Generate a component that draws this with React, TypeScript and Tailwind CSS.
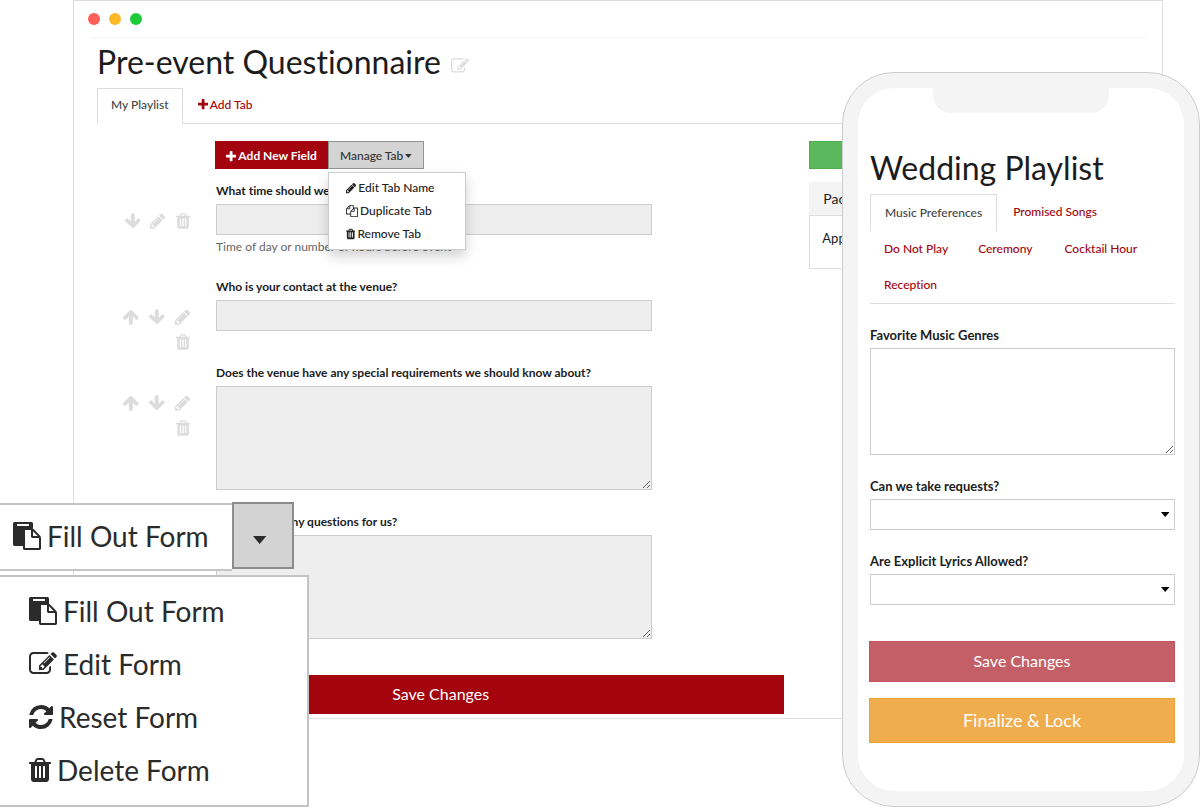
import type { ReactNode } from "react";

type IconShape = { box: string; path: string };

const SHAPES = {
  plus: {
    box: "192 0 1408 1792",
    path: "M1600 736v192q0 40-28 68t-68 28h-416v416q0 40-28 68t-68 28h-192q-40 0-68-28t-28-68v-416h-416q-40 0-68-28t-28-68v-192q0-40 28-68t68-28h416v-416q0-40 28-68t68-28h192q40 0 68 28t28 68v416h416q40 0 68 28t28 68z",
  },
  pencil: {
    box: "128 0 1536 1792",
    path: "M491 1536l91-91-235-235-91 91v107h128v128h107zm523-928q0-22-22-22-10 0-17 7l-542 542q-7 7-7 17 0 22 22 22 10 0 17-7l542-542q7-7 7-17zm-54-192l416 416-832 832h-416v-416zm683 96q0 53-37 90l-166 166-416-416 166-165q36-38 90-38 53 0 91 38l235 234q37 39 37 91z",
  },
  edit: {
    box: "0 0 1792 1792",
    path: "M888 1184l116-116-152-152-116 116v56h96v96h56zm440-720q-16-16-33 1l-350 350q-17 17-1 33t33-1l350-350q17-17 1-33zm80 594v190q0 119-84.5 203.5t-203.5 84.5h-832q-119 0-203.5-84.5t-84.5-203.5v-832q0-119 84.5-203.5t203.5-84.5h832q63 0 117 25 15 7 18 23 3 17-9 29l-49 49q-14 14-32 8-23-6-45-6h-832q-66 0-113 47t-47 113v832q0 66 47 113t113 47h832q66 0 113-47t47-113v-126q0-13 9-22l64-64q15-15 35-7t20 29zm-96-738l288 288-672 672h-288v-288zm444 132l-92 92-288-288 92-92q28-28 68-28t68 28l152 152q28 28 28 68t-28 68z",
  },
  trash: {
    box: "192 0 1408 1792",
    path: "M704 1376v-704q0-14-9-23t-23-9h-64q-14 0-23 9t-9 23v704q0 14 9 23t23 9h64q14 0 23-9t9-23zm256 0v-704q0-14-9-23t-23-9h-64q-14 0-23 9t-9 23v704q0 14 9 23t23 9h64q14 0 23-9t9-23zm256 0v-704q0-14-9-23t-23-9h-64q-14 0-23 9t-9 23v704q0 14 9 23t23 9h64q14 0 23-9t9-23zm-544-992h448l-48-117q-7-9-17-11h-317q-10 2-17 11zm928 32v64q0 14-9 23t-23 9h-96v948q0 83-47 143.5t-113 60.5h-832q-66 0-113-58.5t-47-141.5v-952h-96q-14 0-23-9t-9-23v-64q0-14 9-23t23-9h309l70-167q15-37 54-63t79-26h320q40 0 79 26t54 63l70 167h309q14 0 23 9t9 23z",
  },
  refresh: {
    box: "128 0 1536 1792",
    path: "M1639 1056q0 5-1 7-64 268-268 434.5t-478 166.5q-146 0-282.5-55t-243.5-157l-129 129q-19 19-45 19t-45-19-19-45v-448q0-26 19-45t45-19h448q26 0 45 19t19 45-19 45l-137 137q71 66 161 102t187 36q134 0 250-65t186-179q11-17 53-117 8-23 30-23h192q13 0 22.5 9.5t9.5 22.5zm25-800v448q0 26-19 45t-45 19h-448q-26 0-45-19t-19-45 19-45l138-138q-148-137-349-137-134 0-250 65t-186 179q-11 17-53 117-8 23-30 23h-199q-13 0-22.5-9.5t-9.5-22.5v-7q65-268 270-434.5t480-166.5q146 0 284 55.5t245 156.5l130-129q19-19 45-19t45 19 19 45z",
  },
  copy: {
    box: "0 0 1792 1792",
    path: "M1696 384q40 0 68 28t28 68v1216q0 40-28 68t-68 28h-960q-40 0-68-28t-28-68v-288h-544q-40 0-68-28t-28-68v-672q0-40 20-88t48-76l408-408q28-28 76-48t88-20h416q40 0 68 28t28 68v328q68-40 128-40h416zm-544 213l-299 299h299v-299zm-640-384l-299 299h299v-299zm196 647l316-316v-416h-384v416q0 40-28 68t-68 28h-416v640h512v-256q0-40 20-88t48-76zm956 804v-1152h-384v416q0 40-28 68t-68 28h-416v640h896z",
  },
  paste: {
    box: "0 0 1792 1792",
    path: "M768 1664h896v-640h-416q-40 0-68-28t-28-68v-416h-384v1152zm256-1440v-64q0-13-9.5-22.5t-22.5-9.5h-704q-13 0-22.5 9.5t-9.5 22.5v64q0 13 9.5 22.5t22.5 9.5h704q13 0 22.5-9.5t9.5-22.5zm256 672h299l-299-299v299zm512 128v672q0 40-28 68t-68 28h-960q-40 0-68-28t-28-68v-160h-544q-40 0-68-28t-28-68v-1344q0-40 28-68t68-28h1088q40 0 68 28t28 68v328q21 13 36 28l408 408q28 28 48 76t20 88z",
  },
  down: {
    box: "117 0 1558 1792",
    path: "M1675 832q0 53-37 90l-651 652q-39 37-91 37-53 0-90-37l-651-652q-38-36-38-90 0-53 38-91l74-75q39-37 91-37 53 0 90 37l294 294v-704q0-52 38-90t90-38h128q52 0 90 38t38 90v704l294-294q37-37 90-37 52 0 91 37l75 75q37 39 37 91z",
  },
  up: {
    box: "117 0 1558 1792",
    path: "M1675 971q0 51-37 90l-75 75q-38 38-91 38-54 0-90-38l-294-293v704q0 52-37.5 84.5t-90.5 32.5h-128q-53 0-90.5-32.5t-37.5-84.5v-704l-294 293q-36 38-90 38t-90-38l-75-75q-38-38-38-90 0-53 38-91l651-651q35-37 90-37 54 0 91 37l651 651q37 39 37 91z",
  },
  caret: {
    box: "0 0 10 6",
    path: "M0 0h10L5 6z",
  },
} satisfies Record<string, IconShape>;

type IconName = keyof typeof SHAPES;

function Icon({ name, className }: { name: IconName; className: string }) {
  return (
    <svg aria-hidden="true" viewBox={SHAPES[name].box} fill="currentColor" className={`w-auto shrink-0 ${className}`}>
      <path d={SHAPES[name].path} />
    </svg>
  );
}

const ACTION_LABELS: Partial<Record<IconName, string>> = {
  up: "Move up",
  down: "Move down",
  pencil: "Edit field",
  trash: "Delete field",
};

function FieldRow({ actions, className, children }: { actions: IconName[]; className: string; children: ReactNode }) {
  return (
    <div className={`flex gap-[26px] pr-[132px] ${className}`}>
      <div className="flex w-[93px] shrink-0 flex-wrap content-start justify-end gap-x-[10px] gap-y-[7px] pt-8 pl-5 text-[#dcdcdc]">
        {actions.map((name) => (
          <button key={name} type="button" aria-label={ACTION_LABELS[name]}>
            <Icon name={name} className="h-[18px]" />
          </button>
        ))}
      </div>
      <div className="flex min-w-0 flex-1 flex-col">{children}</div>
    </div>
  );
}

const labelStyle = "mb-0.5 block leading-[22px] font-bold text-[#1c1c1c]";
const greyBox = "block w-full border border-[#cccccc] bg-[#eeeeee]";
const whiteBox = "block w-full border border-[#cccccc] bg-white";

function PhoneSelect({ id, label }: { id: string; label: string }) {
  return (
    <div>
      <label htmlFor={id} className={`text-[13px] ${labelStyle}`}>{label}</label>
      <div className="grid items-center">
        <select id={id} className={`${whiteBox} col-start-1 row-start-1 h-[31px] appearance-none`} />
        <Icon name="caret" className="pointer-events-none col-start-1 row-start-1 mr-1.5 h-[5px] justify-self-end text-black" />
      </div>
    </div>
  );
}

function QuestionnaireWindow() {
  return (
    <main className="mr-[37px] ml-[73px] border border-[#dedede] pb-1">
      <div className="mr-4 ml-[18px] flex h-[37px] items-center gap-[9px] border-b border-[#f8f4f4]">
        <span className="-ml-1 size-3 rounded-full bg-[#ff5f5b]" />
        <span className="size-3 rounded-full bg-[#ffb828]" />
        <span className="size-3 rounded-full bg-[#1fcb3b]" />
      </div>

      <div className="mr-4 ml-[23px]">
        <div className="mb-[3px] flex h-[47px] items-center gap-2.5">
          <h1 className="text-[32px] leading-10 text-[#1c1c1c]">Pre-event Questionnaire</h1>
          <button type="button" aria-label="Rename questionnaire" className="mt-2 text-[#dcdcdc]">
            <Icon name="edit" className="h-[18px]" />
          </button>
        </div>

        <nav className="flex border-b border-[#dddddd] text-xs leading-5 font-medium">
          <a href="#my-playlist" className="-mb-px border border-b-0 border-[#dddddd] bg-white px-[13px] pt-1.5 pb-[9px] text-[#444444]">
            My Playlist
          </a>
          <a href="#add-tab" className="flex items-center gap-0.5 px-[15px] pb-0.5 text-[#a3040d]">
            <Icon name="plus" className="h-[13px]" />
            Add Tab
          </a>
        </nav>

        <div className="grid grid-cols-[686fr_336fr] gap-[25px] pt-[17px]">
          <form>
            <div className="mb-[11px] flex pl-[118px] text-xs font-medium">
              <button type="button" className="flex h-7 w-[113px] items-center justify-center gap-0.5 bg-[#a3040d] pt-0.5 font-bold text-white">
                <Icon name="plus" className="h-[13px]" />
                Add New Field
              </button>
              <div className="relative">
                <button type="button" className="flex h-7 w-24 items-center justify-center gap-0.5 border border-[#8f9494] bg-[#d4d4d4] pt-0.5 text-[#333333]">
                  Manage Tab
                  <Icon name="caret" className="h-1" />
                </button>
                <div role="menu" className="absolute top-[31px] left-0 w-[138px] border border-[#cccccc] bg-white pt-[3px] pb-1 shadow-[0_6px_12px_rgba(0,0,0,0.18)]">
                  {(
                    [
                      ["pencil", "Edit Tab Name"],
                      ["copy", "Duplicate Tab"],
                      ["trash", "Remove Tab"],
                    ] as [IconName, string][]
                  ).map(([icon, text]) => (
                    <button key={text} role="menuitem" type="button" className="flex h-[23px] w-full items-center gap-0.5 pl-[17px] text-[#222222]">
                      <Icon name={icon} className="h-3" />
                      {text}
                    </button>
                  ))}
                </div>
              </div>
            </div>

            <FieldRow actions={["down", "pencil", "trash"]} className="pb-5">
              <label htmlFor="arrival" className={`text-xs ${labelStyle}`}>What time should we arrive?</label>
              <input id="arrival" type="text" disabled className={`${greyBox} h-[31px]`} />
              <p className="mt-[3px] text-xs leading-[18px] text-[#666666]">Time of day or number of hours before event</p>
            </FieldRow>
            <FieldRow actions={["up", "down", "pencil", "trash"]} className="pb-[11px]">
              <label htmlFor="contact" className={`text-xs ${labelStyle}`}>Who is your contact at the venue?</label>
              <input id="contact" type="text" disabled className={`${greyBox} h-[31px]`} />
            </FieldRow>
            <FieldRow actions={["up", "down", "pencil", "trash"]} className="pb-[21px]">
              <label htmlFor="requirements" className={`text-xs ${labelStyle}`}>Does the venue have any special requirements we should know about?</label>
              <textarea id="requirements" disabled className={`${greyBox} h-[104px]`} />
            </FieldRow>
            <FieldRow actions={[]} className="pb-9">
              <label htmlFor="questions" className={`text-xs ${labelStyle}`}>Do you have any questions for us?</label>
              <textarea id="questions" disabled className={`${greyBox} h-[104px]`} />
            </FieldRow>

            <button type="submit" className="block h-[39px] w-full bg-[#a3040d] pb-0.5 text-base text-white">Save Changes</button>
          </form>

          <aside>
            <button type="button" aria-label="Add package" className="block h-7 w-full border border-[#4cae4c] bg-[#5cb85c]" />
            <section className="mt-[13px] text-[13px] text-[#1c1c1c]">
              <h2 className="bg-[#f4f4f4] px-3.5 pt-[7px] pb-1.5 text-sm leading-5">Packages</h2>
              <p className="border border-[#dddddd] px-3 pt-3 pb-5 leading-5">Apply</p>
            </section>
          </aside>
        </div>
      </div>
    </main>
  );
}

function PlaylistPhone() {
  return (
    <section className="absolute top-[72px] right-0 w-[358px] rounded-[52px] border border-[#cccccc] bg-[#f4f4f4] p-[15px]">
      <div className="rounded-[36px] bg-white pb-12">
        <div className="mx-auto h-[25px] w-[176px] rounded-b-[18px] bg-[#f4f4f4]" />
        <div className="pr-[9px] pl-3">
          <h2 className="mt-[35px] mb-1.5 text-[32px] leading-10 text-[#1c1c1c]">Wedding Playlist</h2>
          <nav className="flex flex-wrap border-b border-[#dddddd] text-xs leading-5 font-medium text-[#a3040d]">
            <a href="#music" className="border border-b-0 border-[#dddddd] px-3.5 py-2 text-[#444444]">Music Preferences</a>
            <a href="#promised" className="px-4 py-2">Promised Songs</a>
            <a href="#do-not-play" className="px-3.5 py-2">Do Not Play</a>
            <a href="#ceremony" className="px-4 py-2">Ceremony</a>
            <a href="#cocktail" className="px-4 py-2">Cocktail Hour</a>
            <a href="#reception" className="px-3.5 py-2">Reception</a>
          </nav>
          <form className="mt-5 flex flex-col gap-5">
            <div>
              <label htmlFor="genres" className={`text-[13px] ${labelStyle}`}>Favorite Music Genres</label>
              <textarea id="genres" className={`${whiteBox} h-[107px]`} />
            </div>
            <PhoneSelect id="requests" label="Can we take requests?" />
            <PhoneSelect id="explicit" label="Are Explicit Lyrics Allowed?" />
            <div className="mt-4 -ml-px flex flex-col gap-4 text-white">
              <button type="submit" className="h-[41px] border border-[#c4515b] bg-[#c55f67] pb-0.5 text-base">Save Changes</button>
              <button type="button" className="h-[45px] border border-[#eea236] bg-[#f0ad4e] pb-0.5 text-lg">Finalize &amp; Lock</button>
            </div>
          </form>
        </div>
      </div>
    </section>
  );
}

function FormActions() {
  return (
    <section className="absolute top-[502px] left-0 w-[309px] text-[28px] text-[#2b2b2b]">
      <div className="flex items-start">
        <button type="button" className="mt-px flex h-[68px] w-[232px] items-center gap-1.5 border-y-2 border-[#c4c4c4] bg-white pb-0.5 pl-[13px]">
          <Icon name="paste" className="h-7" />
          Fill Out Form
        </button>
        <button type="button" aria-label="More form actions" className="flex h-[67px] w-[62px] items-center justify-center border-2 border-[#8c8c8c] bg-[#d3d3d3] pr-1.5">
          <Icon name="caret" className="mt-2 h-2" />
        </button>
      </div>
      <div role="menu" className="mt-1 border-2 border-l-0 border-[#c4c4c4] bg-white pt-[7px] pb-[9px]">
        {(
          [
            ["paste", "Fill Out Form"],
            ["edit", "Edit Form"],
            ["refresh", "Reset Form"],
            ["trash", "Delete Form"],
          ] as [IconName, string][]
        ).map(([icon, text]) => (
          <button key={text} role="menuitem" type="button" className="flex h-[53px] w-full items-center gap-1.5 pl-[29px]">
            <Icon name={icon} className="h-7" />
            {text}
          </button>
        ))}
      </div>
    </section>
  );
}

export default function App() {
  return (
    <div className="relative min-h-screen overflow-hidden bg-white font-['Lato',sans-serif] [font-variant-ligatures:none]">
      <QuestionnaireWindow />
      <PlaylistPhone />
      <FormActions />
    </div>
  );
}
